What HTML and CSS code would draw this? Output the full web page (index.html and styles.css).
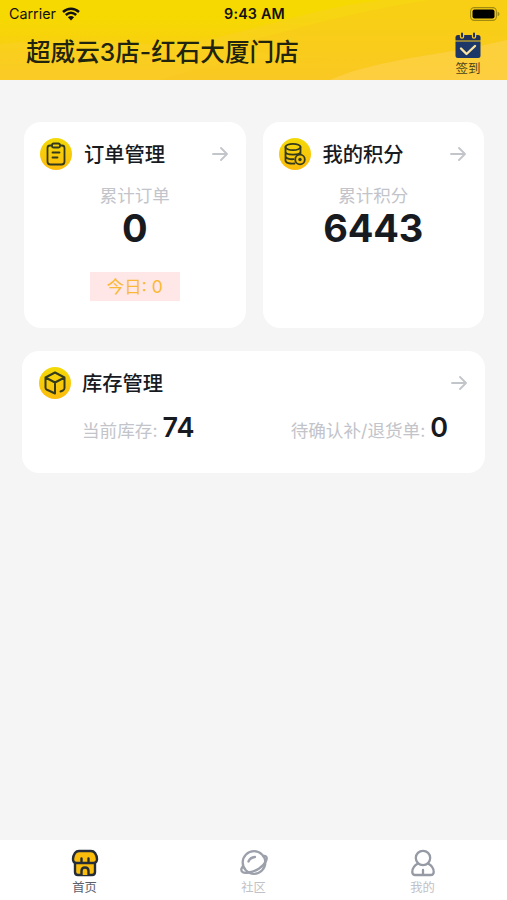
FILE: index.html
```html
<!DOCTYPE html>
<html lang="zh-CN">
<head>
    <meta charset="UTF-8">
    <meta name="viewport" content="width=device-width, initial-scale=1.0">
    <title>首页</title>
    <link rel="stylesheet" href="styles.css">
</head>
<body>
    <header class="header">
        <svg class="header-waves" viewBox="0 0 507 80" preserveAspectRatio="none">
            <path d="M0 44C45 39 95 38 145 44C195 49 255 26 320 11C375 -2 430 -6 507 -8V80H0Z" fill="#fad02c" opacity=".4"/>
            <path d="M160 80C215 63 245 57 330 57C280 56 260 53 215 48C280 36 330 15 430 0H507V80Z" fill="#f8c51c" opacity=".35"/>
            <path d="M330 80C380 58 440 56 507 40V80Z" fill="#ffd45c" opacity=".5"/>
        </svg>
        <div class="status-bar">
            <div class="carrier">
                <span>Carrier</span>
                <svg width="18" height="14" viewBox="0 0 18 14">
                    <path d="M1 5C5.600 .7 12.400 .7 17 5M3.800 8C7 5.100 11 5.100 14.200 8" fill="none" stroke="#111" stroke-width="2.400"/>
                    <path d="M9 13.500L5.900 10.200Q9 7.700 12.100 10.200Z" fill="#111"/>
                </svg>
            </div>
            <div class="time">9:43 AM</div>
            <svg class="battery" width="30" height="14" viewBox="0 0 30 14">
                <rect x=".6" y=".6" width="25.800" height="12.800" rx="3.800" fill="none" stroke="#a08a10" stroke-width="1.100"/>
                <rect x="2.500" y="2.500" width="22" height="9" rx="2" fill="#000"/>
                <path d="M27.600 4.800Q29.500 5.300 29.500 7T27.600 9.200Z" fill="#a08a10"/>
            </svg>
        </div>
        <div class="title-bar">
            <h1>超威云3店-红石大厦门店</h1>
            <div class="sign-in">
                <svg width="26" height="27" viewBox="0 0 26 27">
                    <path d="M3 3H23Q25.500 3 25.500 5.500V8.500H.5V5.500Q.5 3 3 3Z" fill="#20305a"/>
                    <path d="M.5 9.500H25.500V23.500Q25.500 26 23 26H3Q.5 26 .5 23.500Z" fill="#1d3768"/>
                    <g stroke-linecap="round">
                        <path d="M7 2.500V4.500M19 2.500V4.500" stroke="#f8cd21" stroke-width="4.400"/>
                        <path d="M7 1.500V4.500M19 1.500V4.500" stroke="#20305a" stroke-width="2"/>
                    </g>
                    <path d="M6 16.500L11.500 22L20 14" fill="none" stroke="#fbe4a0" stroke-width="2.400" stroke-linecap="round" stroke-linejoin="round"/>
                </svg>
                <span>签到</span>
            </div>
        </div>
    </header>

    <main class="content">
        <div class="card-row">
            <section class="card">
                <div class="card-head">
                    <svg class="card-icon" viewBox="0 0 32 32">
                        <circle cx="16" cy="16" r="16" fill="url(#gold)"/>
                        <g fill="none" stroke="#343b1c" stroke-width="1.800" stroke-linecap="round" stroke-linejoin="round">
                            <path d="M12 7.500H10Q7.500 7.500 7.500 10V23.500Q7.500 26.500 10.500 26.500H21.500Q24.500 26.500 24.500 23.500V10Q24.500 7.500 22 7.500H20"/>
                            <rect x="12" y="5.500" width="8" height="4" rx="1.800"/>
                            <path d="M12.500 14.500H19.500M12.500 19.500H17.500"/>
                        </g>
                    </svg>
                    <h2>订单管理</h2>
                    <svg class="arrow" viewBox="0 0 16 14"><path d="M1 7H14.500M9 1L15 7L9 13"/></svg>
                </div>
                <div class="label">累计订单</div>
                <div class="total">0</div>
                <div class="today">今日: 0</div>
            </section>
            <section class="card">
                <div class="card-head">
                    <svg class="card-icon" viewBox="0 0 32 32">
                        <circle cx="16" cy="16" r="16" fill="url(#gold)"/>
                        <g fill="none" stroke="#343b1c" stroke-width="1.800" stroke-linecap="round">
                            <ellipse cx="14" cy="9" rx="7.500" ry="3.200"/>
                            <path d="M6.500 9V22.500C6.500 25 11 26 15.500 25.500M21.500 9V15.500M6.500 13.500C6.500 17.600 21.500 17.600 21.500 13.500M6.500 18C6.500 20.500 10.500 21.500 14.500 21.200"/>
                            <circle cx="21" cy="21.500" r="4.800"/>
                        </g>
                        <circle cx="21" cy="21.500" r="1.700" fill="#343b1c"/>
                    </svg>
                    <h2>我的积分</h2>
                    <svg class="arrow" viewBox="0 0 16 14"><path d="M1 7H14.500M9 1L15 7L9 13"/></svg>
                </div>
                <div class="label">累计积分</div>
                <div class="total">6443</div>
            </section>
        </div>

        <section class="card stock">
            <div class="card-head">
                <svg class="card-icon" viewBox="0 0 32 32">
                    <circle cx="16" cy="16" r="16" fill="url(#gold)"/>
                    <path d="M16 26.500L7.500 22.500Q6.500 22 6.500 20.500V10.500L16 5.500L25.500 10.500V21Q25.500 22.500 24 23.500L21.500 24.500M6.500 10.500L16 15.500L25.500 10.500M16 15.500V26.500" fill="none" stroke="#343b1c" stroke-width="2" stroke-linecap="round" stroke-linejoin="round"/>
                </svg>
                <h2>库存管理</h2>
                <svg class="arrow" viewBox="0 0 16 14"><path d="M1 7H14.500M9 1L15 7L9 13"/></svg>
            </div>
            <div class="stock-row">
                <div>当前库存: <b>74</b></div>
                <div>待确认补/退货单: <b>0</b></div>
            </div>
        </section>
    </main>

    <nav class="tab-bar">
        <a class="tab active">
            <svg width="28" height="28" viewBox="0 0 28 28">
                <g fill="#fbbd0b" stroke="#252d38" stroke-width="2.400" stroke-linejoin="round">
                    <path d="M4 13V23Q4 26 7 26H21Q24 26 24 23V13Z"/>
                    <path d="M8 2H20Q22.500 2 24 4Q26 7 26 10Q26 14 22.500 14H5.500Q2 14 2 10Q2 7 4 4Q5.500 2 8 2Z"/>
                    <path d="M10.500 26V22Q10.500 18.500 14 18.500T17.500 22V26"/>
                    <path d="M10.500 9.500V12.500M17.500 9.500V12.500" stroke-linecap="round"/>
                </g>
            </svg>
            <span>首页</span>
        </a>
        <a class="tab">
            <svg width="28" height="28" viewBox="0 0 28 28">
                <g fill="none" stroke="#9ca0ab" stroke-width="2.300" stroke-linecap="round">
                    <circle cx="14" cy="13.500" r="11.300"/>
                    <path d="M23.500 7C26.500 6.500 27.500 8.500 26 12C23.500 17.500 16 22.500 8.500 23.500C3.500 24.500 .5 23 1.500 19.500L2.800 17.500"/>
                    <path d="M8.500 12.500Q10 8.500 15 8"/>
                </g>
            </svg>
            <span>社区</span>
        </a>
        <a class="tab">
            <svg width="28" height="28" viewBox="0 0 28 28">
                <g fill="none" stroke="#969aa5" stroke-width="2.300" stroke-linecap="round" stroke-linejoin="round">
                    <circle cx="14" cy="9" r="7.200"/>
                    <path d="M9 14.500C5 16.500 3.300 19.500 3.300 23Q3.300 26 6.300 26H21.700Q24.700 26 24.700 23C24.700 19.500 23 16.500 19 14.500M14 21V26"/>
                </g>
            </svg>
            <span>我的</span>
        </a>
    </nav>

    <svg class="defs" width="0" height="0">
        <linearGradient id="gold" x1="0" y1="0" x2="0" y2="1">
            <stop offset="0" stop-color="#f3da08"/>
            <stop offset="1" stop-color="#fcbb0c"/>
        </linearGradient>
    </svg>
</body>
</html>
```
FILE: styles.css
```css
* {
    box-sizing: border-box;
}

body {
    margin: 0;
    height: 900px;
    display: flex;
    flex-direction: column;
    overflow: hidden;
    font-family: Inter, "Noto Sans CJK SC", sans-serif;
    background-color: #f5f5f5;
    color: #171a1f;
}

svg {
    display: block;
    flex: none;
}

h1, h2 {
    margin: 0;
    font-weight: 500;
}

.header {
    position: relative;
    height: 80px;
    background: linear-gradient(#f6d900 20%, #fbc622);
}

/* decorative waves behind the header text */
.header-waves {
    position: absolute;
    top: 0;
    left: 0;
    width: 100%;
    height: 100%;
}

.status-bar {
    position: relative;
    display: grid;
    grid-template-columns: 1fr auto 1fr;
    align-items: center;
    height: 27px;
    padding: 0 7px 0 9px;
    font-size: 14.3px;
    color: #111;
}

.carrier {
    display: flex;
    align-items: center;
    gap: 6px;
}

.time {
    font-weight: 600;
    letter-spacing: 0.2px;
}

.battery {
    justify-self: end;
}

.title-bar {
    position: relative;
    display: flex;
    justify-content: space-between;
    padding: 5px 26px 0;
}

.title-bar h1 {
    padding-top: 1px;
    font-size: 24.6px;
    line-height: 38px;
    color: #20230e;
}

.sign-in {
    display: flex;
    flex-direction: column;
    align-items: center;
    font-size: 12.5px;
    line-height: 19px;
    color: #4a431b;
}

.content {
    flex: 1;
    padding: 42px 22px 0;
}

.card-row {
    display: grid;
    grid-template-columns: 1fr 1fr;
    gap: 17px;
    padding: 0 1px 0 2px;
}

.card {
    height: 206px;
    padding: 16px;
    border-radius: 17px;
    background-color: #fff;
}

.card-head {
    display: flex;
    align-items: center;
    height: 32px;
}

.card-icon {
    width: 32px;
    height: 32px;
    margin-right: 12px;
}

.card-head h2 {
    flex: 1;
    padding-top: 2px;
    font-size: 20.3px;
    line-height: 32px;
}

.arrow {
    width: 16px;
    height: 14px;
    margin-right: 2px;
    fill: none;
    stroke: #c2c5ca;
    stroke-width: 1.8;
    stroke-linecap: round;
    stroke-linejoin: round;
}

.label {
    margin-top: 12px;
    font-size: 17.5px;
    line-height: 27px;
    text-align: center;
    color: #c2c4ca;
}

.total {
    font-size: 38px;
    font-weight: 700;
    line-height: 39px;
    letter-spacing: -0.2px;
    text-align: center;
}

.today {
    width: 90px;
    margin: 24px auto 0;
    padding-top: 1px;
    font-size: 17.5px;
    line-height: 28px;
    text-align: center;
    color: #f9b934;
    background-color: #ffe7e7;
}

.stock {
    height: 122px;
    margin-top: 23px;
}

.stock .card-icon {
    margin: 0 11px 0 1px;
}

.stock-row {
    display: flex;
    justify-content: space-between;
    padding: 11px 21px 0 44px;
    font-size: 17.6px;
    line-height: 36px;
    color: #c2c4ca;
}

.stock-row b {
    font-size: 27px;
    font-weight: 600;
    color: #171a1f;
}

.tab-bar {
    display: grid;
    grid-template-columns: repeat(3, 1fr);
    height: 60px;
    background-color: #fff;
}

.tab {
    display: flex;
    flex-direction: column;
    align-items: center;
    padding-top: 9px;
    font-size: 12.3px;
    line-height: 21px;
    color: #bfc1c7;
}

.tab.active {
    color: #5c6068;
}

.defs {
    position: absolute;
}
```
